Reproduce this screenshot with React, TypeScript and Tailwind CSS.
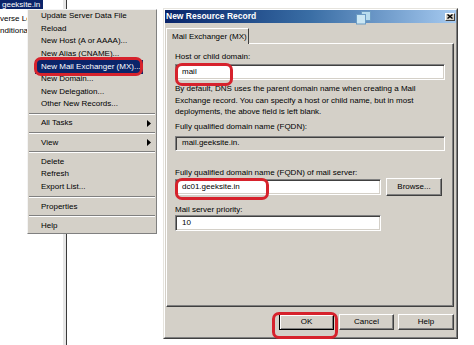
import React from 'react';

const MenuItem = ({ label, sub }: { label: string; sub?: boolean }) => (
  <div className="h-[12.6px] flex items-center pl-[13px] pr-[5px] leading-none whitespace-nowrap">
    <span>{label}</span>
    {sub && (
      <svg className="ml-auto" width="4" height="7" viewBox="0 0 4 7">
        <path d="M0 0L4 3.5L0 7Z" fill="#000" />
      </svg>
    )}
  </div>
);

const Sep = ({ h }: { h: string }) => (
  <div className={`${h} flex items-center px-[1px]`}>
    <div className="w-full h-[2px] border-t border-b border-t-[#808080] border-b-white" />
  </div>
);

const Field = ({ value, className = '' }: { value: string; className?: string }) => (
  <div
    className={`h-[16px] bg-white border border-t-[#808080] border-l-[#808080] border-b-white border-r-white shadow-[inset_1px_1px_0_#404040,inset_-1px_-1px_0_#d4d0c8] flex items-center pl-[6px] leading-none ${className}`}
  >
    {value}
  </div>
);

const Btn = ({ label, w, def }: { label: string; w: string; def?: boolean }) => (
  <div
    className={`${w} h-[16px] bg-[#d4d0c8] border flex items-center justify-center leading-none ${
      def
        ? 'border-black shadow-[inset_1px_1px_0_#ffffff,inset_-1px_-1px_0_#808080]'
        : 'border-t-white border-l-white border-r-[#404040] border-b-[#404040] shadow-[inset_-1px_-1px_0_#808080]'
    }`}
  >
    {label}
  </div>
);

export default function App() {
  return (
    <div className="relative w-[474px] h-[345px] overflow-hidden bg-white font-['Liberation_Sans',Arial,sans-serif] text-[8px] text-black">
      {/* console behind */}
      <div className="flex h-full">
        <div className="w-[63px] flex flex-col whitespace-nowrap overflow-hidden">
          <div className="h-[9px] w-[43px] bg-[#0a246a] text-white pl-[2px] leading-[9px]">geeksite.in</div>
          <div className="mt-[4px] w-[27px] overflow-hidden h-[12px] leading-[12px]">verse Lo</div>
          <div className="w-[27px] overflow-hidden h-[12px] leading-[12px]">nditiona</div>
        </div>
        <div className="w-[3px] bg-[#e6e6e6]" />
        <div className="w-[1px] bg-[#3a3a3a]" />
        <div className="flex-1" />
      </div>

      {/* context menu */}
      <div className="absolute left-[27px] top-[9px] w-[130px] bg-[#d4d0c8] border border-t-[#f4f4f4] border-l-[#f4f4f4] border-r-[#808080] border-b-[#808080] flex flex-col">
        <MenuItem label="Update Server Data File" />
        <MenuItem label="Reload" />
        <MenuItem label="New Host (A or AAAA)..." />
        <MenuItem label="New Alias (CNAME)..." />
        <div className="h-[12.6px] flex items-center">
          <div className="ml-[7px] w-[108px] h-[14px] bg-[#0a246a] text-white flex items-center pl-[6px] leading-none whitespace-nowrap">
            New Mail Exchanger (MX)...
          </div>
        </div>
        <MenuItem label="New Domain..." />
        <MenuItem label="New Delegation..." />
        <MenuItem label="Other New Records..." />
        <Sep h="h-[6px]" />
        <MenuItem label="All Tasks" sub />
        <Sep h="h-[7px]" />
        <MenuItem label="View" sub />
        <Sep h="h-[6.5px]" />
        <MenuItem label="Delete" />
        <MenuItem label="Refresh" />
        <MenuItem label="Export List..." />
        <Sep h="h-[7px]" />
        <MenuItem label="Properties" />
        <Sep h="h-[7px]" />
        <MenuItem label="Help" />
        <div className="h-[1px]" />
      </div>

      {/* dialog */}
      <div className="absolute left-[163px] top-[8px] w-[295px] h-[331px] bg-[#d4d0c8] border border-t-[#e6e4de] border-l-[#e6e4de] border-r-[#404040] border-b-[#404040]">
        <div className="h-full flex flex-col border border-t-white border-l-white border-r-[#808080] border-b-[#808080]">
          <div className="h-[13px] bg-linear-to-r from-[#0a246a] via-[#3a6ea5] to-[#a6caf0] flex items-center pl-[1px] pr-[1px]">
            <span className="text-white font-bold text-[8.5px] leading-none whitespace-nowrap">New Resource Record</span>
            <svg className="ml-auto mr-[74px] -mb-[3px]" width="15" height="14" viewBox="0 0 15 14">
              <rect x="5.5" y="0.5" width="9" height="9" fill="#b8dcee" stroke="#6c9cc4" />
              <rect x="0.5" y="3.5" width="9" height="9.5" fill="#cbe7f4" stroke="#6c9cc4" />
            </svg>
            <div className="w-[10px] h-[8px] bg-[#d4d0c8] border border-t-white border-l-white border-r-[#404040] border-b-[#404040] flex items-center justify-center">
              <svg width="6" height="5" viewBox="0 0 6 5">
                <path d="M0.5 0.5L5.5 4.5M5.5 0.5L0.5 4.5" stroke="#000" strokeWidth="1.4" />
              </svg>
            </div>
          </div>

          <div className="flex-1 flex flex-col pl-[1px] pr-[2px] pt-[5px]">
            <div className="flex">
              <div className="relative z-10 -mb-[1px] w-[83px] h-[16px] bg-[#d4d0c8] border-t border-l border-r border-t-white border-l-white border-r-[#404040] flex items-center pl-[5px] leading-none whitespace-nowrap">
                Mail Exchanger (MX)
              </div>
            </div>
            <div className="h-[264px] border border-t-white border-l-white border-r-[#404040] border-b-[#404040] shadow-[inset_-1px_-1px_0_#808080] px-[8px] pt-[7px] flex flex-col">
              <div className="leading-[12px]">Host or child domain:</div>
              <Field value="mail" className="mt-[1px]" />
              <div className="mt-[3px] leading-[11.5px] whitespace-nowrap">
                By default, DNS uses the parent domain name when creating a Mail
                <br />
                Exchange record. You can specify a host or child name, but in most
                <br />
                deployments, the above field is left blank.
              </div>
              <div className="mt-[3.5px] leading-[12px]">Fully qualified domain name (FQDN):</div>
              <Field value="mail.geeksite.in." className="mt-[2.5px] !h-[15px] !bg-[#d4d0c8]" />
              <div className="mt-[16.5px] leading-[11px]">Fully qualified domain name (FQDN) of mail server:</div>
              <div className="h-[18px] flex items-center">
                <Field value="dc01.geeksite.in" className="w-[206px]" />
                <div className="ml-[5px]">
                  <div className="w-[56px] h-[18px] bg-[#d4d0c8] border border-t-white border-l-white border-r-[#404040] border-b-[#404040] shadow-[inset_-1px_-1px_0_#808080] flex items-center justify-center leading-none">
                    Browse...
                  </div>
                </div>
              </div>
              <div className="mt-[7.5px] leading-[11px]">Mail server priority:</div>
              <Field value="10" className="mt-[0.5px] w-[206px]" />
            </div>
            <div className="mt-[7px] flex justify-end gap-[5px]">
              <Btn label="OK" w="w-[55px]" def />
              <Btn label="Cancel" w="w-[55px]" />
              <div className="-ml-[1px]">
                <Btn label="Help" w="w-[56px]" />
              </div>
            </div>
          </div>
        </div>
      </div>

      {/* red annotation rings */}
      <div className="absolute left-[34px] top-[57px] w-[109px] h-[19px] rounded-[7px] border-[3px] border-[#d6222c]" />
      <div className="absolute left-[175px] top-[63px] w-[58px] h-[23px] rounded-[7px] border-[3px] border-[#d6222c]" />
      <div className="absolute left-[175px] top-[178px] w-[94px] h-[22px] rounded-[7px] border-[3px] border-[#d6222c]" />
      <div className="absolute left-[272px] top-[312px] w-[66px] h-[27px] rounded-[7px] border-[3px] border-[#d6222c]" />
    </div>
  );
}
